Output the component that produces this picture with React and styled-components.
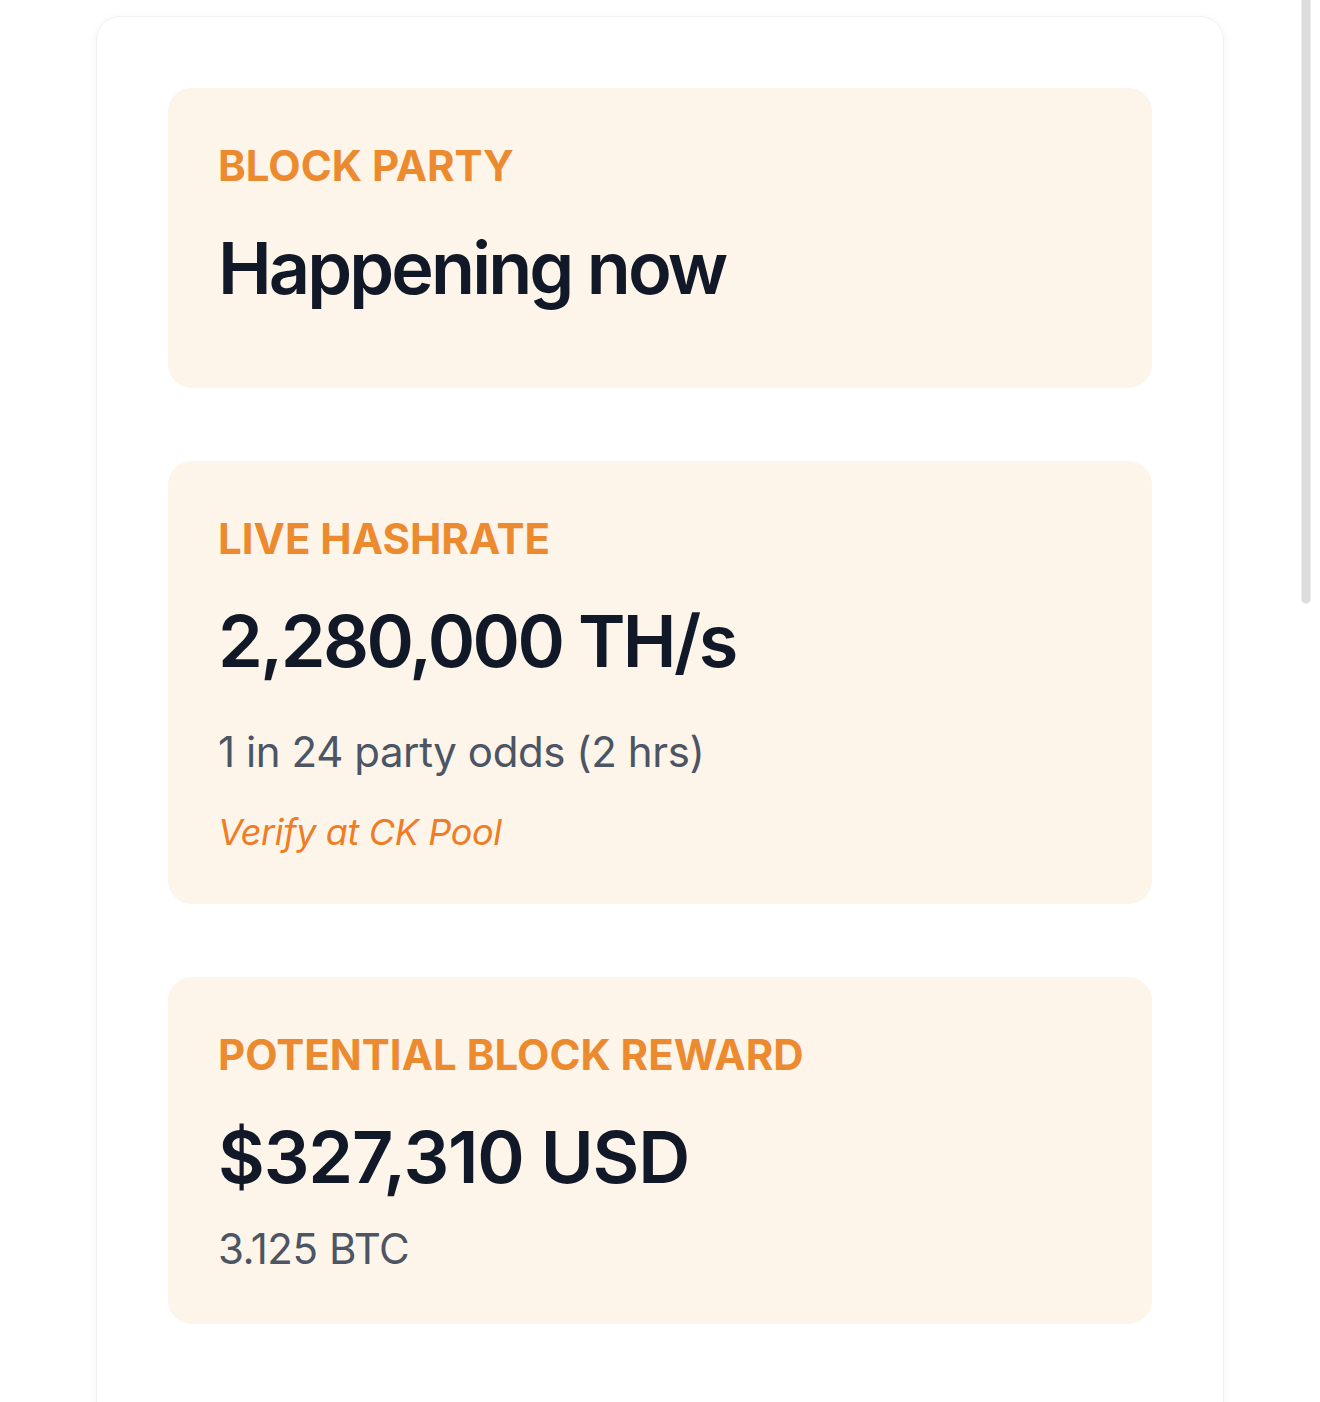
import styled, { createGlobalStyle } from "styled-components";

const GlobalStyle = createGlobalStyle`
  html, body {
    margin: 0;
    padding: 0;
    background: #ffffff;
    overflow: hidden;
  }
  body {
    font-family: Inter, "Noto Sans", "Liberation Sans", sans-serif;
    -webkit-font-smoothing: antialiased;
  }
`;

const Page = styled.main`
  width: 1320px;
  height: 1402px;
  padding-top: 16px;
  box-sizing: border-box;
  display: flex;
  justify-content: center;
`;

const Panel = styled.section`
  width: 1128px;
  min-height: 1500px;
  box-sizing: border-box;
  background: #ffffff;
  border: 1px solid #f1f1f1;
  border-radius: 24px;
  box-shadow: 0 2px 10px rgba(0, 0, 0, 0.05);
  padding: 71px 71px 0;
  display: flex;
  flex-direction: column;
  gap: 73px;
`;

const StatCard = styled.div`
  background: #fdf4ea;
  border-radius: 24px;
  padding: 48px 50px ${(p) => p.$bottom}px;
  display: flex;
  flex-direction: column;
`;

const Label = styled.div`
  font-size: 42px;
  line-height: 60px;
  font-weight: 700;
  text-transform: uppercase;
  color: #ec8a2f;
`;

const Value = styled.div`
  margin-top: 24px;
  font-size: 72px;
  line-height: 96px;
  font-weight: 600;
  letter-spacing: ${(p) => p.$tracking || "-0.032em"};
  color: #111827;
`;

const Sub = styled.div`
  margin-top: ${(p) => p.$gap}px;
  font-size: 42px;
  line-height: 60px;
  letter-spacing: -0.01em;
  color: #4b5563;
`;

const VerifyLink = styled.a`
  margin-top: 20px;
  font-size: 36px;
  line-height: 60px;
  font-style: italic;
  letter-spacing: -0.01em;
  color: #ee7d25;
  text-decoration: none;
`;

const ScrollThumb = styled.div`
  position: fixed;
  top: 0;
  left: 1301px;
  width: 10px;
  height: 604px;
  background: #dcdcdc;
  border: 1px solid #ececec;
  border-top: none;
  border-radius: 0 0 5px 5px;
  box-sizing: border-box;
`;

export default function App() {
  return (
    <>
      <GlobalStyle />
      <Page>
        <Panel>
          <StatCard $bottom={72}>
            <Label>Block Party</Label>
            <Value $tracking="-0.04em">Happening now</Value>
          </StatCard>
          <StatCard $bottom={42}>
            <Label>Live Hashrate</Label>
            <Value $tracking="-0.036em">2,280,000 TH/s</Value>
            <Sub $gap={33}>1 in 24 party odds (2 hrs)</Sub>
            <VerifyLink href="#">Verify at CK Pool</VerifyLink>
          </StatCard>
          <StatCard $bottom={45}>
            <Label>Potential Block Reward</Label>
            <Value $tracking="-0.016em">$327,310 USD</Value>
            <Sub $gap={14}>3.125 BTC</Sub>
          </StatCard>
        </Panel>
      </Page>
      <ScrollThumb />
    </>
  );
}
